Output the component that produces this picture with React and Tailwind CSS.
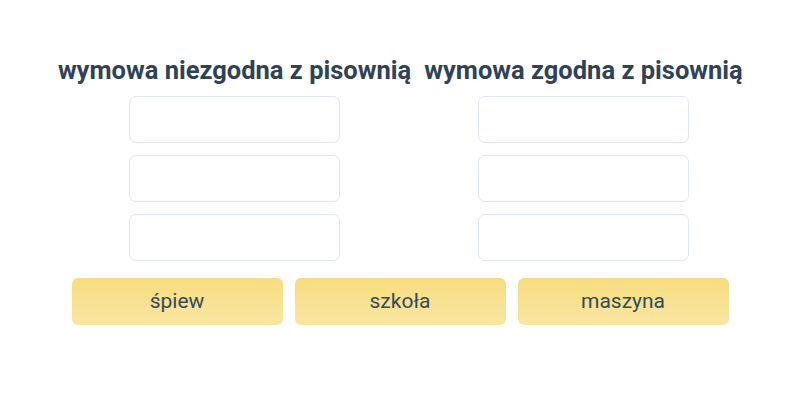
import React from 'react';

const columns = [
  { title: 'wymowa niezgodna z pisownią' },
  { title: 'wymowa zgodna z pisownią' },
];

const words = ['śpiew', 'szkoła', 'maszyna'];

const DropSlot = () => (
  <div className="w-[211px] h-[47px] rounded-[7px] border border-[#e1e7ee] bg-white" />
);

const Column = ({ title }) => (
  <div className="w-[349px] flex flex-col items-center">
    <h2 className="text-[25.5px] leading-[30px] font-bold text-[#2f4256] whitespace-nowrap">{title}</h2>
    <div className="mt-[11px] flex flex-col gap-[12px]">
      <DropSlot />
      <DropSlot />
      <DropSlot />
    </div>
  </div>
);

export default function App() {
  return (
    <div className="w-[800px] h-[400px] bg-white font-['Roboto',sans-serif]">
      <div className="pt-[55px] pl-[60px] flex">
        {columns.map((c) => (
          <Column key={c.title} title={c.title} />
        ))}
      </div>
      <div className="mt-[17px] flex justify-center gap-[12px]">
        {words.map((w) => (
          <div
            key={w}
            className="w-[211px] h-[47px] rounded-[6px] bg-gradient-to-b from-[#f8dc7f] to-[#f9e6a3] flex items-center justify-center text-[21px] text-[#34495e]"
          >
            {w}
          </div>
        ))}
      </div>
    </div>
  );
}
